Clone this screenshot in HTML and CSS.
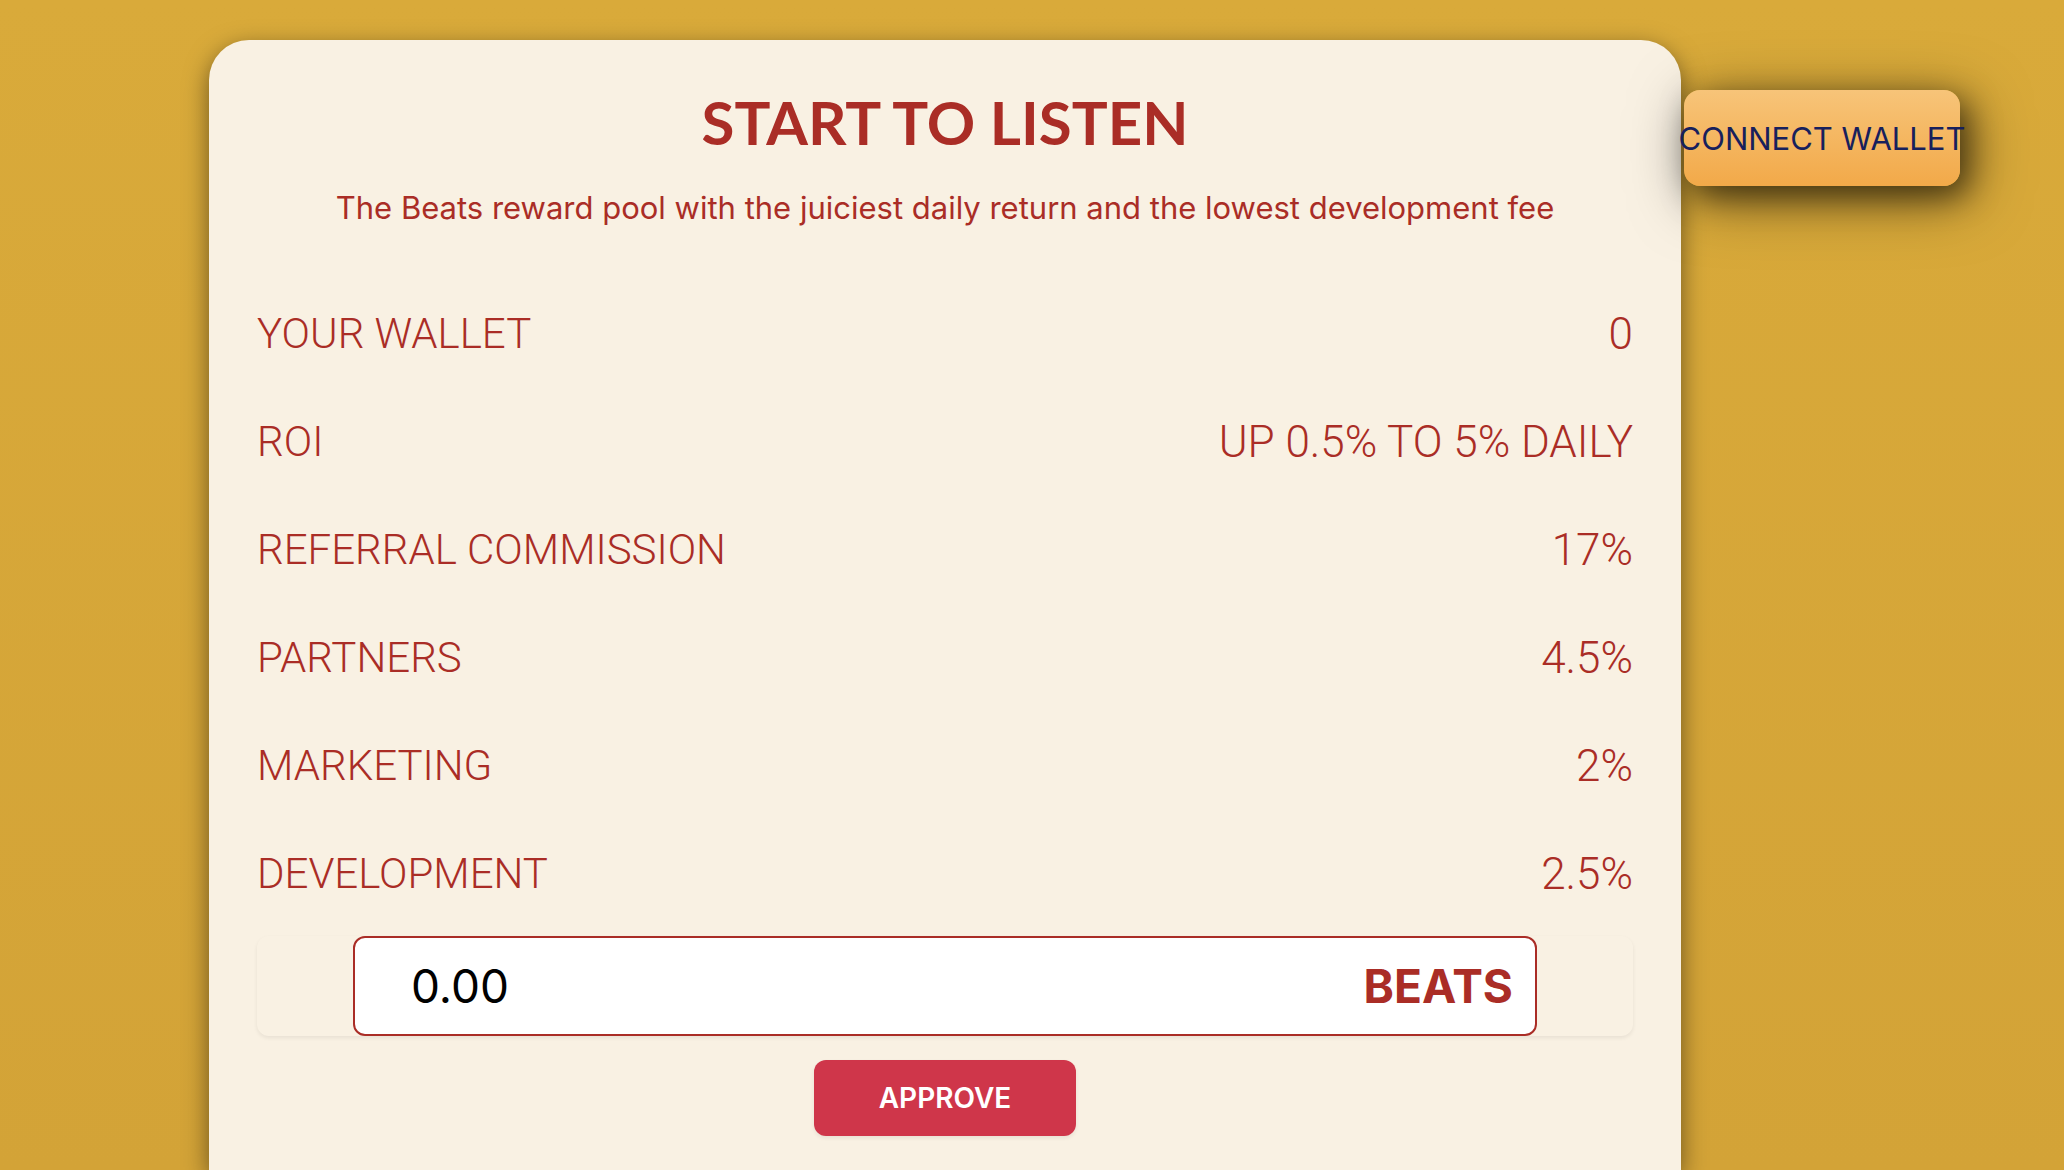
FILE: index.html
```html
<!DOCTYPE html>
<html lang="en">
<head>
<meta charset="utf-8">
<meta name="viewport" content="width=device-width, initial-scale=1">
<title>Start to Listen</title>
<link rel="stylesheet" href="styles.css">
</head>
<body>
<div class="page">
  <main class="card">
    <h1 class="title">START TO LISTEN</h1>
    <p class="subtitle">The Beats reward pool with the juiciest daily return and the lowest development fee</p>
    <dl class="stats">
      <div class="stat"><dt>YOUR WALLET</dt><dd>0</dd></div>
      <div class="stat"><dt>ROI</dt><dd>UP 0.5% TO 5% DAILY</dd></div>
      <div class="stat"><dt>REFERRAL COMMISSION</dt><dd>17%</dd></div>
      <div class="stat"><dt>PARTNERS</dt><dd>4.5%</dd></div>
      <div class="stat"><dt>MARKETING</dt><dd>2%</dd></div>
      <div class="stat"><dt>DEVELOPMENT</dt><dd>2.5%</dd></div>
    </dl>
    <form class="form">
      <div class="amount">
        <div class="field">
          <input class="field-input" id="amount" type="text" inputmode="decimal" value="0.00">
          <label class="field-unit" for="amount">BEATS</label>
        </div>
      </div>
      <button class="approve" type="button">APPROVE</button>
    </form>
  </main>
  <button class="connect" type="button">CONNECT WALLET</button>
</div>
</body>
</html>
```
FILE: styles.css
```css
* {
  box-sizing: border-box;
}

body {
  margin: 0;
  min-height: 100vh;
  background: linear-gradient(#d9aa3a, #d3a337);
  color: #aa2d26;
  font-family: Inter, "Liberation Sans", sans-serif;
}

.page {
  display: flex;
  align-items: flex-start;
  gap: 3px;
  min-height: 100vh;
  padding: 40px 104px 0 209px;
}

.card {
  flex: 1;
  align-self: stretch;
  padding: 46px 48px 32px;
  border-radius: 40px 40px 0 0;
  background: #f9f1e3;
  box-shadow: 0 8px 24px rgba(0, 0, 0, 0.5);
}

.title {
  margin: 0;
  font-family: Lato, sans-serif;
  font-size: 60px;
  font-weight: 700;
  line-height: 72px;
  text-align: center;
}

.subtitle {
  margin: 30px 0 0;
  font-size: 31px;
  line-height: 40px;
  text-align: center;
}

.stats {
  margin: 52px 0 8px;
}

.stat {
  display: flex;
  justify-content: space-between;
  font-family: Roboto, sans-serif;
  font-size: 42px;
  font-weight: 300;
  line-height: 108px;
}

.stat dd {
  margin: 0;
  font-size: 44px;
}

.amount {
  padding: 0 96px;
  border-radius: 12px;
  box-shadow: 0 2px 4px rgba(0, 0, 0, 0.07);
}

.field {
  display: flex;
  align-items: center;
  height: 100px;
  padding: 0 22px 0 56px;
  border: 2px solid #aa2d26;
  border-radius: 12px;
  background: #fff;
  font-size: 46px;
}

.field-input {
  flex: 1;
  min-width: 0;
  padding: 0;
  border: 0;
  outline: 0;
  background: none;
  color: #000;
  font: inherit;
}

.field-unit {
  font-weight: 700;
}

.approve {
  display: block;
  width: 262px;
  height: 76px;
  margin: 24px auto 0;
  border: 0;
  border-radius: 12px;
  background: #cf364a;
  box-shadow: 0 2px 4px rgba(0, 0, 0, 0.07);
  color: #fff;
  font: 600 28px Inter, sans-serif;
}

.connect {
  display: flex;
  flex: none;
  align-items: center;
  justify-content: center;
  width: 276px;
  height: 96px;
  margin-top: 50px;
  padding: 0;
  border: 0;
  border-radius: 16px;
  background: linear-gradient(#f7c479, #f2a949);
  box-shadow: 8px 10px 30px rgba(0, 0, 0, 0.5), 8px 12px 60px rgba(0, 0, 0, 0.5);
  color: #17205c;
  font: 400 31px Inter, sans-serif;
  white-space: nowrap;
}
```
